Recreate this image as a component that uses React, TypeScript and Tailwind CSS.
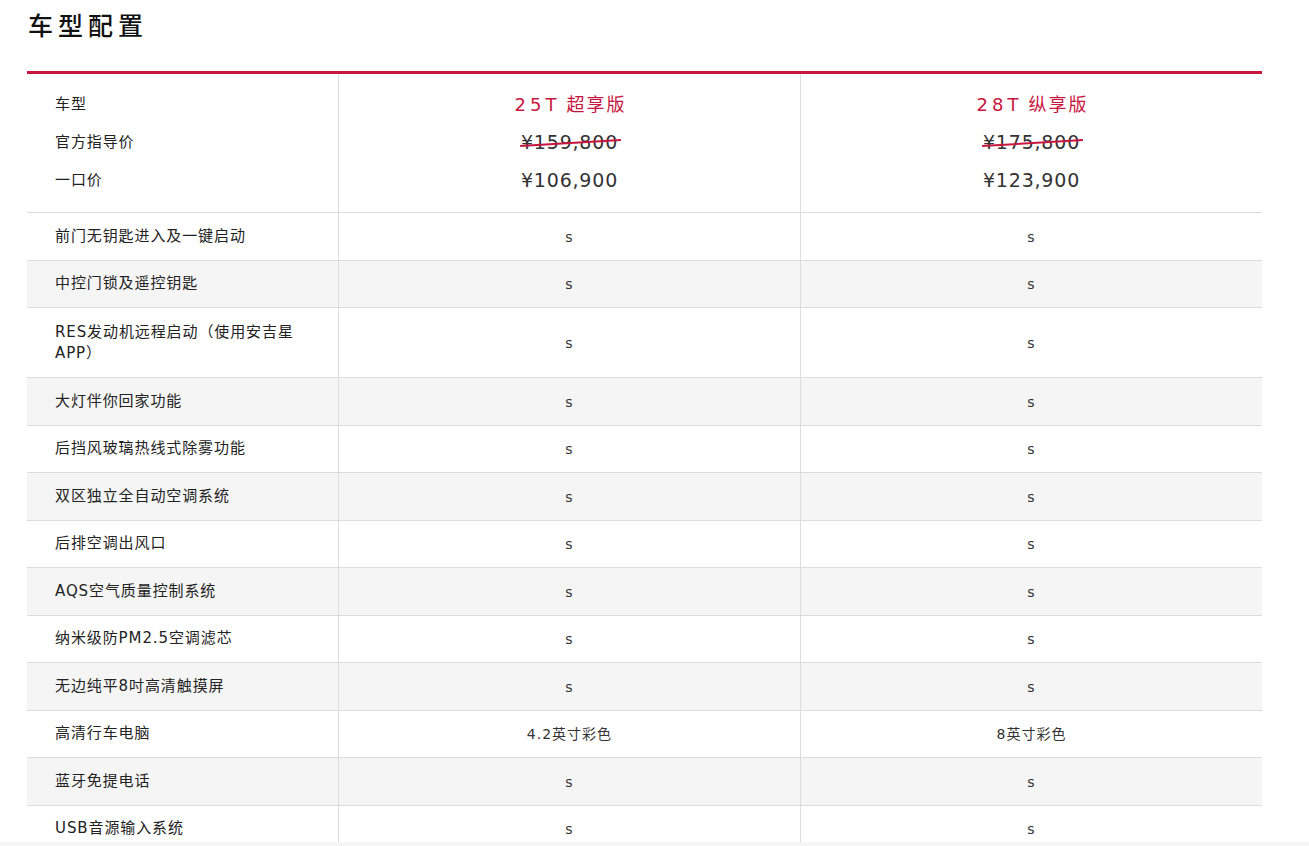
import React from "react";

const FONT = '"DejaVu Sans", "Noto Sans CJK SC", sans-serif';

type Row = { label: React.ReactNode; a: string; b: string; tall?: boolean };

const rows: Row[] = [
  { label: "前门无钥匙进入及一键启动", a: "s", b: "s" },
  { label: "中控门锁及遥控钥匙", a: "s", b: "s" },
  {
    label: (
      <>
        RES发动机远程启动（使用安吉星
        <br />
        APP）
      </>
    ),
    a: "s",
    b: "s",
    tall: true,
  },
  { label: "大灯伴你回家功能", a: "s", b: "s" },
  { label: "后挡风玻璃热线式除雾功能", a: "s", b: "s" },
  { label: "双区独立全自动空调系统", a: "s", b: "s" },
  { label: "后排空调出风口", a: "s", b: "s" },
  { label: "AQS空气质量控制系统", a: "s", b: "s" },
  { label: "纳米级防PM2.5空调滤芯", a: "s", b: "s" },
  { label: "无边纯平8吋高清触摸屏", a: "s", b: "s" },
  { label: "高清行车电脑", a: "4.2英寸彩色", b: "8英寸彩色" },
  { label: "蓝牙免提电话", a: "s", b: "s" },
  { label: "USB音源输入系统", a: "s", b: "s" },
];

function Struck({ children }: { children: React.ReactNode }) {
  return (
    <span className="relative inline-block">
      {children}
      <span className="absolute left-[-1px] right-[-3px] top-[50%] h-[1.5px] bg-[#c8173f] -rotate-[3.5deg]" />
    </span>
  );
}

function HeaderCol({ code, name, orig, price }: { code: string; name: string; orig: string; price: string }) {
  return (
    <div className="border-l border-[#dcdcdc] pt-[11px] pb-[13px] flex flex-col items-center">
      <div className="h-[38px] flex items-center text-[18px] text-[#c8173f]">
        <span className="tracking-[4px] mr-[6px]">{code}</span>
        <span className="tracking-[2px] mr-[-2px]">{name}</span>
      </div>
      <div className="h-[38px] flex items-center text-[19px] tracking-[0.8px] text-[#333]">
        <Struck>{orig}</Struck>
      </div>
      <div className="h-[38px] flex items-center text-[19px] tracking-[0.8px] text-[#333]">{price}</div>
    </div>
  );
}

export default function App() {
  return (
    <div className="w-[1309px] h-[846px] overflow-hidden bg-white flex flex-col" style={{ fontFamily: FONT }}>
      <div className="h-[842px] overflow-hidden px-[27px]">
        <div className="w-[1235px]">
          <h1 className="pt-[12px] pl-[1px] text-[25px] leading-[30px] tracking-[5px] font-medium text-[#111]">
            车型配置
          </h1>
          <div className="mt-[29px] h-[3px] bg-[#c8173f]" />

          <div className="grid grid-cols-[311px_462px_462px] border-b border-[#dcdcdc]">
            <div className="pl-[28px] pt-[11px] pb-[13px] text-[15px] tracking-[0.9px] text-[#222]">
              <div className="h-[38px] flex items-center">车型</div>
              <div className="h-[38px] flex items-center">官方指导价</div>
              <div className="h-[38px] flex items-center">一口价</div>
            </div>
            <HeaderCol code="25T" name="超享版" orig="¥159,800" price="¥106,900" />
            <HeaderCol code="28T" name="纵享版" orig="¥175,800" price="¥123,900" />
          </div>

          {rows.map((r, i) => (
            <div
              key={i}
              className={`grid grid-cols-[311px_462px_462px] border-b border-[#dcdcdc] ${
                i % 2 === 1 ? "bg-[#f5f5f5]" : "bg-white"
              } ${r.tall ? "min-h-[70px]" : "min-h-[47.5px]"}`}
            >
              <div className="pl-[28px] pr-[10px] flex items-center text-[15px] leading-[21px] tracking-[0.9px] text-[#222]">
                <div>{r.label}</div>
              </div>
              <div className="border-l border-[#dcdcdc] flex items-center justify-center text-[14px] tracking-[1px] text-[#333] pt-[2px]">
                {r.a}
              </div>
              <div className="border-l border-[#dcdcdc] flex items-center justify-center text-[14px] tracking-[1px] text-[#333] pt-[2px]">
                {r.b}
              </div>
            </div>
          ))}
        </div>
      </div>
      <div className="h-[4px] bg-[#f5f5f5]" />
    </div>
  );
}
